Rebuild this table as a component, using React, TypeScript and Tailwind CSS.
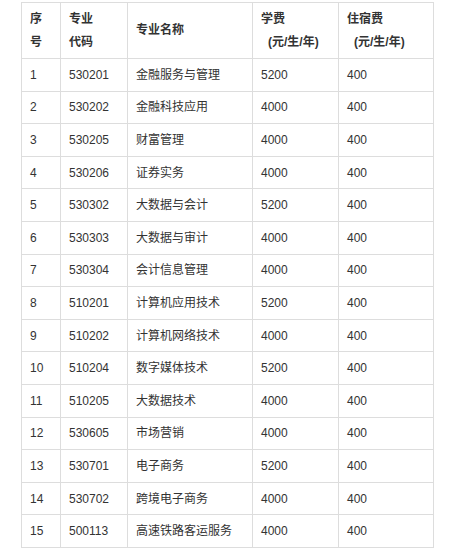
const rows: [string, string, string, string, string][] = [
  ["1", "530201", "金融服务与管理", "5200", "400"],
  ["2", "530202", "金融科技应用", "4000", "400"],
  ["3", "530205", "财富管理", "4000", "400"],
  ["4", "530206", "证券实务", "4000", "400"],
  ["5", "530302", "大数据与会计", "5200", "400"],
  ["6", "530303", "大数据与审计", "4000", "400"],
  ["7", "530304", "会计信息管理", "4000", "400"],
  ["8", "510201", "计算机应用技术", "5200", "400"],
  ["9", "510202", "计算机网络技术", "4000", "400"],
  ["10", "510204", "数字媒体技术", "5200", "400"],
  ["11", "510205", "大数据技术", "4000", "400"],
  ["12", "530605", "市场营销", "4000", "400"],
  ["13", "530701", "电子商务", "5200", "400"],
  ["14", "530702", "跨境电子商务", "4000", "400"],
  ["15", "500113", "高速铁路客运服务", "4000", "400"],
];

const cell = "border border-[#dddddd] pl-[8px] pr-[4px] align-middle text-left";

export default function App() {
  return (
    <div
      className="w-[449px] h-[557px] bg-white pt-[2px] pl-[21px] text-[12px] text-[#333333]"
      style={{ fontFamily: '"Liberation Sans", "Noto Sans CJK SC", sans-serif' }}
    >
      <table className="border-collapse table-fixed w-[412px]">
        <colgroup>
          <col className="w-[39px]" />
          <col className="w-[67px]" />
          <col className="w-[125px]" />
          <col className="w-[86px]" />
          <col className="w-[95px]" />
        </colgroup>
        <thead>
          <tr className="h-[56px] font-bold leading-[23px]">
            <th className={cell}>
              <div>序</div>
              <div>号</div>
            </th>
            <th className={cell}>
              <div>专业</div>
              <div>代码</div>
            </th>
            <th className={cell}>专业名称</th>
            <th className={cell}>
              <div>学费</div>
              <div className="pl-[7px]">(元/生/年)</div>
            </th>
            <th className={cell}>
              <div>住宿费</div>
              <div className="pl-[7px]">(元/生/年)</div>
            </th>
          </tr>
        </thead>
        <tbody>
          {rows.map((r) => (
            <tr key={r[0]} className="h-[32.6px]">
              {r.map((v, i) => (
                <td key={i} className={cell}>
                  {v}
                </td>
              ))}
            </tr>
          ))}
        </tbody>
      </table>
    </div>
  );
}
